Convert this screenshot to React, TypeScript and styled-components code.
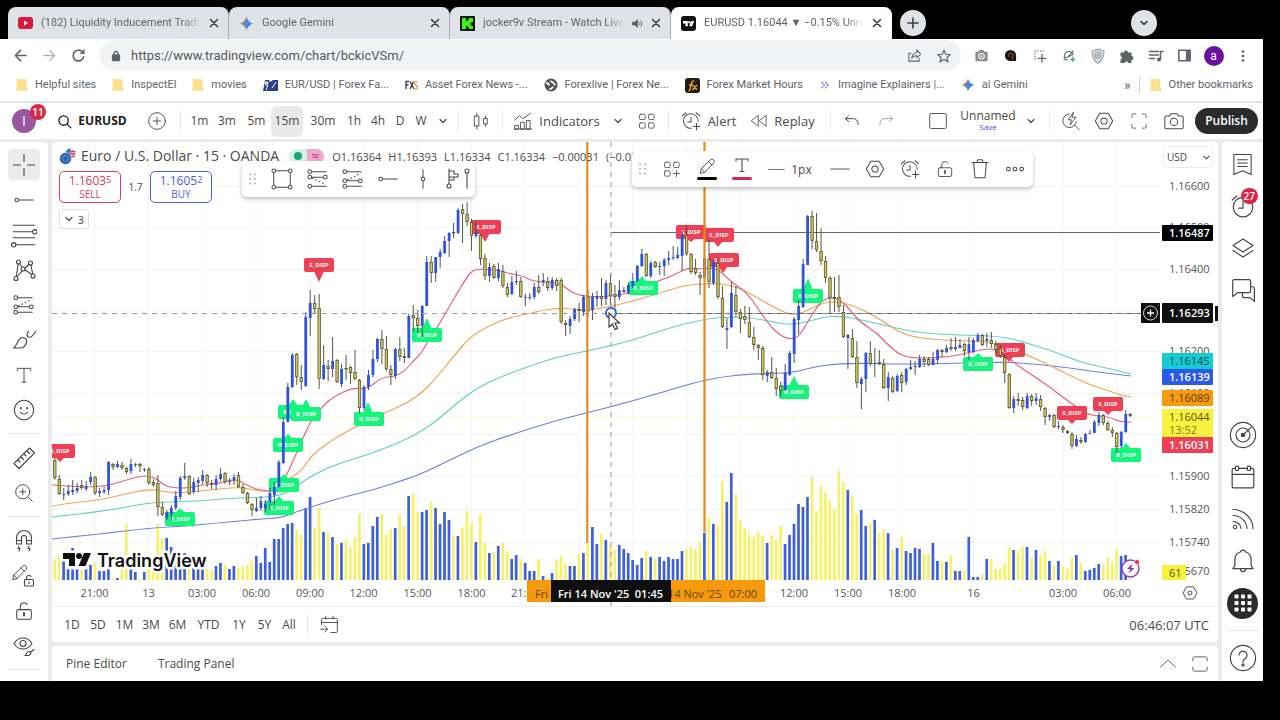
import React from "react";
import styled, { createGlobalStyle, css } from "styled-components";

/* ------------------------------------------------------------------ data */

// high, body top, body bottom, low, direction (1 up / 0 down), volume height
type Candle = [number, number, number, number, number, number];

const candles: Candle[] = [
  [458,460,478,480,0,21],[475,479,494,495,0,23],[488,494,495,500,1,19],[485,491,494,496,1,12],
  [480,490,492,495,1,32],[483,488,491,493,1,14],[480,485,488,490,0,14],[481,486,489,491,1,14],
  [472,477,482,485,1,15],[476,477,493,495,0,17],[488,491,493,497,1,9],[487,490,492,494,1,9],
  [461,462,490,495,1,11],[463,464,467,470,0,1],[461,464,467,468,1,2],[462,465,468,470,0,13],
  [467,468,472,474,0,56],[459,464,471,474,1,12],[463,464,465,467,1,8],[463,464,466,472,0,1],
  [468,469,470,472,1,8],[467,469,483,485,0,12],[479,482,485,487,0,14],[475,483,507,516,0,56],
  [502,507,515,516,0,41],[510,512,518,520,1,42],[505,508,514,521,1,33],[491,496,508,510,1,24],
  [476,478,497,500,1,26],[463,476,478,480,1,27],[475,476,494,495,0,13],[478,482,492,494,1,12],
  [477,480,483,492,1,12],[470,475,481,484,1,11],[474,475,483,487,0,11],[480,483,484,489,0,10],
  [475,479,485,490,1,14],[468,474,479,481,1,17],[472,473,482,484,0,15],[478,481,482,485,1,11],
  [474,477,480,485,1,14],[472,475,487,488,0,12],[484,487,493,494,0,14],[492,493,503,504,0,15],
  [503,504,510,516,0,19],[498,508,511,512,1,24],[496,501,508,511,1,17],[500,504,508,512,1,32],
  [488,493,502,510,1,18],[482,487,495,505,1,41],[460,462,487,488,1,41],[417,422,463,464,1,52],
  [383,387,422,422,1,56],[353,355,387,388,1,57],[353,354,377,385,0,50],[365,377,382,390,0,45],
  [312,317,386,387,1,72],[290,303,318,336,1,83],[295,303,309,314,0,52],[294,308,379,389,0,72],
  [345,365,379,380,1,48],[360,366,369,381,0,47],[337,361,369,377,1,43],[359,360,382,383,0,36],
  [364,369,384,387,1,37],[355,368,369,380,0,40],[366,367,373,384,0,33],[350,372,379,380,0,43],
  [379,380,408,413,0,66],[385,387,408,410,1,36],[370,375,387,390,1,37],[350,359,375,377,1,54],
  [338,339,359,362,1,63],[330,339,349,364,0,66],[336,349,369,371,0,45],[365,369,375,385,0,51],
  [348,349,376,379,1,52],[337,349,357,361,0,65],[348,356,358,363,0,54],[314,316,358,358,1,84],
  [305,315,318,332,0,86],[310,318,326,333,0,68],[305,306,326,337,1,68],[256,262,306,306,1,70],
  [256,262,273,283,0,78],[257,257,273,282,1,72],[249,252,257,268,1,56],[236,241,253,254,1,68],
  [232,233,241,257,1,60],[223,232,233,238,0,45],[208,210,233,234,1,44],[204,209,214,243,0,52],
  [202,214,222,226,0,69],[219,222,236,251,0,57],[222,232,236,238,1,38],[234,235,259,265,0,66],
  [254,258,276,280,0,37],[263,267,276,282,1,27],[264,266,278,279,0,28],[263,269,278,281,1,34],
  [265,271,286,288,0,37],[283,287,295,297,0,29],[276,282,294,295,1,21],[271,281,282,285,1,25],
  [277,281,297,298,0,21],[294,297,298,306,1,17],[293,297,298,300,1,9],[283,287,297,299,1,9],
  [275,287,292,294,0,21],[273,280,282,286,1,4],[277,281,288,291,0,2],[277,280,288,290,1,7],
  [278,280,286,291,0,19],[278,280,322,324,0,24],[320,323,325,336,0,16],[316,319,326,334,1,14],
  [308,309,319,321,1,14],[303,309,311,322,0,26],[295,297,312,316,1,27],[290,297,311,316,0,36],
  [293,297,310,320,1,53],[291,296,299,307,1,36],[278,296,299,306,0,46],[280,283,299,305,1,40],
  [274,283,296,305,0,34],[285,294,297,312,0,30],[280,290,297,300,1,35],[287,290,292,293,1,31],
  [283,285,293,294,1,27],[273,281,286,288,1,20],[265,266,281,282,1,15],[249,254,266,267,1,22],
  [253,254,276,277,0,29],[261,263,276,278,1,23],[261,262,267,268,0,21],[262,266,267,275,1,23],
  [258,260,266,276,1,19],[251,258,260,265,1,23],[246,257,258,260,1,21],[247,255,258,259,1,21],
  [231,235,256,271,1,29],[225,235,254,256,0,31],[253,254,272,274,0,33],[259,268,273,275,0,31],
  [272,275,278,295,0,38],[256,258,278,279,1,47],[240,259,282,288,0,62],[260,262,283,285,1,56],
  [260,263,297,299,0,54],[286,298,327,328,0,99],[318,328,330,349,1,78],[282,293,327,328,1,107],
  [286,295,312,317,0,86],[309,312,319,333,0,60],[306,316,320,324,0,52],[307,322,337,338,0,45],
  [327,337,345,350,0,43],[344,345,348,360,0,48],[346,348,375,380,0,44],[370,372,376,382,1,37],
  [357,372,378,379,0,45],[368,378,389,396,0,40],[382,386,391,397,0,54],[364,373,390,391,1,36],
  [351,353,375,376,1,45],[317,319,354,363,1,56],[300,306,320,334,1,76],[259,264,307,308,1,73],
  [215,216,265,265,1,83],[211,216,241,249,0,103],[213,241,250,252,0,69],[228,251,261,265,0,94],
  [256,261,278,283,0,87],[276,278,298,314,0,79],[277,297,299,312,0,70],[275,297,307,312,0,109],
  [305,312,337,338,0,98],[334,335,338,369,1,90],[329,338,357,358,0,83],[341,357,383,388,0,66],
  [377,379,384,409,1,70],[352,353,379,392,1,54],[341,353,364,366,0,56],[348,363,364,377,1,60],
  [350,362,364,365,0,47],[359,364,388,389,0,50],[372,377,388,401,1,47],[376,378,392,393,0,30],
  [374,376,391,392,1,32],[372,375,383,392,0,43],[368,369,382,385,1,29],[360,367,369,370,1,27],
  [361,366,367,375,1,32],[355,359,367,368,1,31],[356,359,362,367,0,26],[357,359,365,366,0,26],
  [352,359,365,365,1,37],[349,350,360,364,1,19],[349,350,352,357,0,19],[345,348,352,353,1,18],
  [338,347,349,351,0,25],[337,347,349,351,1,9],[339,345,348,348,1,9],[343,344,351,356,0,10],
  [337,344,352,360,1,43],[338,340,352,353,1,3],[333,335,341,342,1,3],[334,335,345,346,0,6],
  [333,339,341,347,1,21],[332,340,344,348,0,21],[341,344,350,353,0,11],[345,348,356,358,0,11],
  [354,357,373,383,0,16],[373,374,408,409,0,32],[396,399,408,413,1,30],[393,399,401,406,0,29],
  [397,400,407,410,0,33],[393,396,408,409,1,33],[394,396,401,406,0,22],[393,398,401,405,1,30],
  [395,399,407,411,0,25],[407,408,417,425,0,29],[414,415,417,421,1,19],[414,415,427,428,0,14],
  [421,426,427,429,1,19],[425,427,430,433,0,14],[430,431,433,434,0,11],[432,434,446,449,0,22],
  [435,439,446,447,1,25],[437,440,442,444,0,17],[433,434,442,443,1,9],[430,433,434,434,1,10],
  [420,422,433,433,1,12],[412,415,423,426,1,16],[414,415,423,425,0,15],[421,423,430,431,0,22],
  [427,430,433,437,0,18],[432,433,447,453,0,31],[431,432,446,448,1,24],[410,414,432,433,1,25],
  [413,414,416,417,0,2],
];

const FIRST_X = 54.8;
const PITCH = 4.481;
const VOLUME_BASE = 580;

type Point = [number, number];

const averages: { color: string; points: Point[] }[] = [
  {
    color: "#6f7fdc",
    points: [[52,539],[100,534],[150,528],[187,526],[217,523],[240,521],[260,519],[280,518],[293,513],[317,505],[340,498],[373,490],[407,479],[423,473],[450,460],[477,447],[507,436],[557,420],[607,408],[660,393],[693,383],[720,377],[750,374],[793,373],[813,367],[843,363],[893,364],[927,364],[1000,362],[1023,363],[1063,367],[1097,372],[1131,376]],
  },
  {
    color: "#5fd0c2",
    points: [[52,517],[100,512],[147,503],[167,502],[200,501],[233,498],[277,497],[293,489],[308,478],[323,470],[343,462],[370,454],[403,441],[422,431],[440,418],[457,403],[477,388],[500,377],[530,366],[557,357],[587,351],[627,342],[660,331],[687,323],[713,318],[733,317],[753,318],[773,322],[790,325],[807,322],[823,317],[840,316],[857,319],[880,324],[900,329],[923,333],[957,335],[1000,336],[1023,342],[1047,349],[1067,357],[1087,364],[1107,368],[1131,374]],
  },
  {
    color: "#efa452",
    points: [[52,506],[70,503],[100,500],[125,494],[150,489],[165,492],[180,493],[210,490],[238,487],[255,490],[268,492],[280,486],[292,477],[302,470],[313,454],[332,440],[353,428],[380,415],[405,404],[422,393],[437,377],[453,357],[470,337],[487,327],[507,318],[540,311],[557,308],[573,309],[587,310],[603,308],[630,302],[653,295],[673,289],[687,285],[717,283],[737,287],[753,295],[773,307],[790,315],[803,313],[813,307],[827,302],[840,302],[857,307],[880,319],[897,331],[913,337],[940,340],[967,341],[993,342],[1023,353],[1047,364],[1067,374],[1090,385],[1110,391],[1120,395],[1131,397]],
  },
  {
    color: "#e5637c",
    points: [[52,485],[63,486],[90,487],[106,486],[120,482],[140,476],[150,476],[157,479],[165,486],[175,488],[190,488],[200,485],[215,484],[236,479],[243,483],[255,489],[268,491],[276,491],[287,475],[300,445],[310,422],[322,407],[333,397],[352,388],[362,389],[368,388],[383,377],[393,377],[405,371],[413,361],[420,355],[427,343],[440,323],[453,300],[467,277],[473,270],[480,269],[497,270],[507,273],[523,276],[530,280],[540,282],[560,283],[568,290],[580,296],[603,297],[628,294],[647,285],[667,278],[680,272],[687,268],[700,269],[717,268],[727,278],[737,286],[747,293],[757,307],[767,322],[777,333],[787,339],[797,338],[803,330],[810,318],[817,307],[823,300],[832,297],[842,301],[850,310],[860,322],[877,333],[887,344],[900,355],[913,358],[937,358],[960,355],[983,349],[997,349],[1007,357],[1020,367],[1047,385],[1060,395],[1075,406],[1088,415],[1110,417],[1120,422],[1131,422]],
  },
];

// left edge, top edge, pointer tip x, pointer tip y
const sellFlags: [number, number, number, number][] = [
  [45,444,60,462],[304,258,319,282],[471,220,485,242],[676,225,691,242],[704,228,718,247],
  [709,253,723,273],[995,343,1009,362],[1057,406,1072,424],[1093,397,1108,415],
];
const buyFlags: [number, number, number, number][] = [
  [165,512,180,508],[264,501,279,496],[269,478,284,474],[273,438,288,434],[278,405,293,399],
  [291,407,306,399],[354,412,368,402],[412,328,427,318],[628,281,642,276],[793,289,808,278],
  [779,385,794,376],[963,357,978,353],[1111,448,1126,443],
];

const timeTicks: [string, number][] = [
  ["21:00",94.5],["13",148.5],["03:00",202],["06:00",256],["09:00",310],["12:00",363.5],["15:00",417.5],
  ["18:00",471.5],["21:00",525],["",579],["",633],["",687],["",741],["12:00",794],["15:00",848],
  ["18:00",902],["16",973.5],["03:00",1063],["06:00",1117],
];
const priceTicks: [string, number][] = [
  ["1.16600",186],["1.16500",227],["1.16400",269],["",310],["1.16200",351],["1.16100",393],["",434],
  ["1.15900",476],["1.15820",509],["1.15740",542],["1.15670",571],
];

/* ---------------------------------------------------------------- styles */

const uiFont = `Roboto, "Open Sans", sans-serif`;
const tvFont = `"Open Sans", "Noto Sans", sans-serif`;
const ink = "#4a4a4a";

const GlobalStyle = createGlobalStyle`
  * { box-sizing: border-box; }
  body { margin: 0; background: #000; font-family: ${tvFont}; color: ${ink}; }
  button, input, select { font: inherit; color: inherit; margin: 0; padding: 0; border: 0; background: none; }
  a { color: inherit; text-decoration: none; }
  svg { display: block; }
`;

const Screen = styled.div`
  min-height: 100vh;
  padding-right: 17px;
  background: #000;
`;

const TabStrip = styled.div`
  display: flex;
  align-items: flex-end;
  height: 39px;
  padding-left: 8px;
  font: 11px/16px ${uiFont};
`;

const Tab = styled.div<{ $active?: boolean }>`
  display: flex;
  align-items: center;
  gap: 8px;
  flex: 0 1 221px;
  min-width: 0;
  height: 32px;
  padding: 0 9px 0 10px;
  border-radius: 8px 8px 0 0;
  background: ${(p) => (p.$active ? "#fff" : "#dfe2e6")};
  border-right: 1px solid ${(p) => (p.$active ? "#fff" : "#a9adb2")};
  color: #5f6368;
`;

const TabTitle = styled.span`
  flex: 1;
  min-width: 0;
  overflow: hidden;
  white-space: nowrap;
  mask-image: linear-gradient(90deg, #000 88%, transparent);
`;

const RoundButton = styled.button<{ $end?: boolean }>`
  display: grid;
  place-items: center;
  width: 26px;
  height: 26px;
  margin: ${(p) => (p.$end ? "0 106px 3px auto" : "0 0 3px 8px")};
  border-radius: 50%;
  background: #dfe2e6;
  color: #3c4043;
`;

const PlainButton = styled.button`
  display: grid;
  place-items: center;
  flex: none;
  color: #3c4043;
`;

const BrowserBar = styled.div`
  display: flex;
  align-items: center;
  height: 33px;
  padding: 0 6px;
  background: #fff;
  color: #5f6368;
`;

const BarSlot = styled.button`
  display: grid;
  place-items: center;
  flex: none;
  width: 29px;
  height: 29px;
`;

const Address = styled.div`
  display: flex;
  align-items: center;
  flex: 1;
  height: 31px;
  margin: 0 6px 0 7px;
  padding: 0 3px 0 10px;
  border-radius: 16px;
  background: #f1f3f4;
`;

const AddressInput = styled.input`
  flex: 1;
  min-width: 0;
  height: 24px;
  margin-left: 9px;
  font: 13px/16px ${uiFont};
  outline: none;
  color: #55595e;
`;

const Profile = styled.span`
  display: grid;
  place-items: center;
  width: 20px;
  height: 20px;
  border-radius: 50%;
  background: #6d10a0;
  color: #fff;
  font: 12px/16px ${uiFont};
`;

const Bookmarks = styled.nav`
  display: flex;
  align-items: center;
  gap: 16px;
  height: 31px;
  padding: 0 10px 3px 16px;
  background: #fff;
  border-bottom: 2px solid #e4e4e6;
  font: 11px/16px ${uiFont};
  color: #5f6368;
`;

const Bookmark = styled.a<{ $last?: boolean }>`
  display: flex;
  align-items: center;
  gap: 7px;
  flex: none;
  white-space: nowrap;
  ${(p) => p.$last && css`
    padding-left: 10px;
    margin-left: -8px;
    border-left: 1px solid #d0d0d0;
  `}
`;

const More = styled.button`
  margin-left: auto;
  font: 14px/16px ${uiFont};
`;

const TopBar = styled.header`
  display: flex;
  align-items: center;
  height: 36px;
  background: #fff;
  font-size: 12px;
  line-height: 16px;
`;

const Slot = styled.button<{ $w: number; $on?: boolean }>`
  display: flex;
  align-items: center;
  justify-content: center;
  gap: 6px;
  flex: none;
  width: ${(p) => p.$w}px;
  height: 31px;
  border-radius: 6px;
  white-space: nowrap;
  background: ${(p) => (p.$on ? "#e9e9e9" : "transparent")};
`;

const SymbolButton = styled(Slot)`
  padding-right: 4px;
  font-weight: 700;
  color: #1c1c1c;
`;

const Labelled = styled(Slot)`
  font-size: 13px;
`;

const Rule = styled.i`
  flex: none;
  width: 1px;
  height: 20px;
  margin: 0 6px;
  background: #e8e8e8;
`;

const Filler = styled.span`
  flex: 1;
`;

const Avatar = styled.div`
  position: relative;
  flex: none;
  display: grid;
  place-items: center;
  width: 24px;
  height: 24px;
  margin: 0 12px;
  border-radius: 50%;
  background: #9857a0;
  color: #fff;
  font-size: 14px;
`;

const Badge = styled.span<{ $side?: boolean }>`
  position: absolute;
  top: ${(p) => (p.$side ? "3px" : "-5px")};
  right: ${(p) => (p.$side ? "5px" : "-10px")};
  height: 16px;
  min-width: 16px;
  padding: 0 ${(p) => (p.$side ? 3 : 2)}px;
  border-radius: 8px;
  background: #d92846;
  color: #fff;
  font-size: 10px;
  line-height: 16px;
  font-weight: 600;
  text-align: center;
`;

const LayoutName = styled.button`
  display: flex;
  flex-direction: column;
  align-items: center;
  flex: none;
  width: 60px;
  font-size: 12px;
  line-height: 14px;
  padding-bottom: 2px;
`;

const SaveNote = styled.small`
  font-size: 8px;
  line-height: 8px;
  color: #4b4be0;
`;

const Publish = styled.button`
  flex: none;
  width: 63px;
  height: 26px;
  margin: 0 5px 0 4px;
  border-radius: 13px;
  background: #2b2b2b;
  color: #fff;
  font-size: 12px;
  font-weight: 600;
`;

const Workspace = styled.div`
  display: flex;
  gap: 4px;
  padding-top: 3px;
  background: #ebebeb;
`;

const ToolRail = styled.aside`
  display: flex;
  flex-direction: column;
  align-items: center;
  flex: none;
  width: 48px;
  padding-top: 5px;
  background: #fff;
  border-radius: 0 4px 0 0;
  color: #444;
`;

const RailButton = styled.button<{ $on?: boolean }>`
  display: grid;
  place-items: center;
  width: 32px;
  height: 31px;
  margin: 2px 0;
  border-radius: 5px;
  background: ${(p) => (p.$on ? "#ebebeb" : "transparent")};
`;

const RailRule = styled.hr`
  flex: none;
  width: 32px;
  height: 1px;
  margin: 6px auto;
  border: 0;
  background: #e4e4e4;
`;

const Center = styled.main`
  display: flex;
  flex-direction: column;
  flex: 1;
  min-width: 0;
`;

const ChartCard = styled.section`
  position: relative;
  background: #fff;
  border-radius: 4px 4px 0 0;
  overflow: hidden;
`;

const ChartSvg = styled.svg`
  width: 100%;
  height: auto;
  font-family: ${tvFont};
`;

const Legend = styled.div`
  position: absolute;
  top: 5px;
  left: 7px;
`;

const LegendRow = styled.div`
  display: flex;
  align-items: center;
  height: 18px;
  white-space: nowrap;
  font-size: 11px;
`;

const SymbolTitle = styled.h1`
  margin: 0 10px 0 5px;
  font-size: 14px;
  line-height: 18px;
  font-weight: 400;
`;

const StatusPill = styled.span`
  display: flex;
  width: 35px;
  height: 15px;
  margin-right: 8px;
  border-radius: 8px;
  overflow: hidden;
`;

const StatusHalf = styled.span<{ $tone: string }>`
  display: grid;
  place-items: center;
  flex: 1;
  background: ${(p) => p.$tone};
  color: #c2347f;
  font-size: 14px;
  line-height: 14px;
`;

const Ohlc = styled.span`
  display: flex;
  gap: 7px;
  font-size: 11px;
`;

const QuoteRow = styled.div`
  display: flex;
  align-items: center;
  margin-top: 6px;
  font-size: 10px;
`;

const Spread = styled.span`
  width: 29px;
  text-align: center;
`;

const Quote = styled.button<{ $tone: string }>`
  width: 62px;
  height: 32px;
  border: 1px solid ${(p) => p.$tone};
  border-radius: 5px;
  background: #fff;
  color: ${(p) => p.$tone};
  font-size: 12px;
  line-height: 14px;
  font-weight: 500;
`;

const QuoteSide = styled.span`
  display: block;
  font-size: 10px;
  line-height: 13px;
  font-weight: 400;
`;

const Pip = styled.span`
  font-size: 9px;
  vertical-align: 2px;
`;

const Collapse = styled.button`
  display: flex;
  align-items: center;
  justify-content: center;
  gap: 4px;
  width: 30px;
  height: 20px;
  margin-top: 6px;
  border: 1px solid #dedede;
  border-radius: 3px;
  background: #fff;
  font-size: 11px;
`;

const FloatBar = styled.div<{ $x: number; $y: number; $w: number }>`
  position: absolute;
  left: ${(p) => p.$x}px;
  top: ${(p) => p.$y}px;
  width: ${(p) => p.$w}px;
  height: 36px;
  display: flex;
  align-items: center;
  border-radius: 5px;
  background: #fff;
  box-shadow: 0 2px 4px rgba(0, 0, 0, 0.25);
  overflow: hidden;
  font-size: 12px;
`;

const CurrencyBox = styled.label`
  position: absolute;
  top: 4px;
  right: 5px;
  display: flex;
  align-items: center;
  width: 50px;
  height: 22px;
  padding-right: 1px;
  border: 1px solid #ececec;
  border-radius: 4px;
  background: #fff;
  font-size: 10px;
`;

const Currency = styled.select`
  appearance: none;
  flex: 1;
  min-width: 0;
  padding-left: 3px;
  outline: none;
`;

const RangeBar = styled.div`
  display: flex;
  align-items: center;
  height: 36px;
  padding: 0 9px 0 7px;
  background: #fff;
  border-top: 1px solid #ececec;
  border-radius: 0 0 4px 4px;
  font-size: 12px;
`;

const Clock = styled.button`
  margin-left: auto;
  font-size: 13px;
`;

const PanelBar = styled.footer`
  display: flex;
  align-items: center;
  gap: 31px;
  height: 35px;
  margin-top: 4px;
  padding: 0 3px 0 14px;
  background: #fff;
  border-radius: 4px 4px 0 0;
  font-size: 12px;
`;

const PanelTools = styled.div`
  display: flex;
  margin-left: auto;
`;

const SideRail = styled.aside`
  display: flex;
  flex-direction: column;
  align-items: center;
  flex: none;
  width: 41px;
  padding: 1px 0 2px;
  background: #fff;
  border-radius: 4px 0 0 0;
  color: #444;
`;

const SideButton = styled.button`
  position: relative;
  display: grid;
  place-items: center;
  width: 41px;
  height: 42px;
`;

const AppsDisc = styled.span`
  display: grid;
  place-items: center;
  width: 31px;
  height: 31px;
  border-radius: 50%;
  background: #2b2b2b;
  color: #fff;
`;

/* ----------------------------------------------------------------- icons */

type IconProps = { size?: number; w?: number; box?: string; children: React.ReactNode };
const Icon = ({ size = 24, w = 1.1, box = "0 0 24 24", children }: IconProps) => (
  <svg width={size} height={size} viewBox={box} fill="none" stroke="currentColor" strokeWidth={w} strokeLinecap="round" strokeLinejoin="round" aria-hidden="true">
    {children}
  </svg>
);

const Ring = ({ x, y, r = 2 }: { x: number; y: number; r?: number }) => <circle cx={x} cy={y} r={r} fill="#fff" />;

const Chevron = ({ size = 10 }: { size?: number }) => (
  <Icon size={size} box="0 0 10 10" w={1.2}><path d="M2 3.500 5 6.500 8 3.500" /></Icon>
);
const Close = () => (
  <Icon size={10} box="0 0 10 10" w={1.6}><path d="M1.500 1.500 8.500 8.500M8.500 1.500 1.500 8.500" /></Icon>
);
const Folder = () => (
  <Icon size={12} box="0 0 12 14"><path d="M.5 .5h10v10h1.200V13.500H.5Z" fill="#fbe38d" stroke="#e9cd6c" strokeWidth=".6" /></Icon>
);
const Gemini = ({ size = 14 }: { size?: number }) => (
  <svg width={size} height={size} viewBox="0 0 16 16" aria-hidden="true">
    <path d="M8 0C8.600 4.500 11.500 7.400 16 8H8Z" fill="#4285f4" />
    <path d="M8 16C8.600 11.500 11.500 8.600 16 8H8Z" fill="#3f6fe0" />
    <path d="M8 0C7.400 4.500 4.500 7.400 0 8H8Z" fill="#e5544b" />
    <path d="M8 16C7.400 11.500 4.500 8.600 0 8H8Z" fill="#3fae62" />
    <path d="M8 3.500C8.500 6 10 7.500 12.500 8 10 8.500 8.500 10 8 12.500 7.500 10 6 8.500 3.500 8 6 7.500 7.500 6 8 3.500Z" fill="#4b8bf2" />
  </svg>
);
const TvMark = ({ fill = "#fff" }: { fill?: string }) => (
  <g fill={fill} stroke="none">
    <path d="M0 0H12V13H6V6H0Z" /><circle cx="16" cy="3" r="3" /><path d="M21 0H28L22.500 13H15.500Z" />
  </g>
);
const Hex = ({ size = 22 }: { size?: number }) => (
  <Icon size={size}><path d="M7.500 3.500h9L21.500 12l-5 8.500h-9L2.500 12Z" /><circle cx="12" cy="12" r="3.400" /></Icon>
);
const AlarmPlus = ({ size = 22 }: { size?: number }) => (
  <Icon size={size}><path d="M19.800 12.500A8 8 0 1 0 12.500 20M12 8v5H8.500M2.500 6.500 6.500 3M21.500 6.500 17.500 3M18 14.500v7M14.500 18h7" /></Icon>
);
const OpenLock = ({ size = 22 }: { size?: number }) => (
  <Icon size={size}><rect x="4" y="10.500" width="16" height="10.500" rx="2" /><path d="M8 10.500V7a4 4 0 0 1 7.500-1.800" /><path d="M12 14v3" strokeWidth="2" /></Icon>
);
const Grip = () => (
  <Icon size={14} box="0 0 14 14">
    <g fill="#b0b0b0" stroke="none">
      {[2.5, 7, 11.5].map((y) => [4, 9].map((x) => <circle key={`${x}${y}`} cx={x} cy={y} r="1" />))}
    </g>
  </Icon>
);
const FibUp = () => (
  <Icon size={22}><path d="M4 4h17M4 14h15M4 20h17" /><path d="M6 13 20 6" strokeDasharray="1 3" /><Ring x={3} y={4} /><Ring x={3} y={14} /><Ring x={20} y={14} /><Ring x={3} y={20} /></Icon>
);
const FibDown = () => (
  <Icon size={22}><path d="M4 4h17M4 10h15M4 20h17" /><path d="M6 11 20 18" strokeDasharray="1 3" /><Ring x={3} y={4} /><Ring x={3} y={10} /><Ring x={20} y={10} /><Ring x={3} y={20} /></Icon>
);
const Trend = () => <Icon size={22}><path d="M5 12h17" /><Ring x={4} y={12} /></Icon>;
const TextIcon = ({ size = 22 }: { size?: number }) => <Icon size={size}><path d="M4 6.500V4h16v2.500M12 4v16.500M9.500 20.500h5" /></Icon>;
const Pencil = () => <path d="M4 20l1-5L15.500 4.500a2.500 2.500 0 0 1 4 4L9 19ZM13.500 6.500l4 4M5 15l4 4" />;

/* ----------------------------------------------------------------- chart */

const smooth = (pts: Point[]) => {
  let d = `M${pts[0][0]} ${pts[0][1]}`;
  for (let i = 1; i < pts.length - 1; i++) {
    const [x, y] = pts[i];
    const mx = (x + pts[i + 1][0]) / 2;
    const my = (y + pts[i + 1][1]) / 2;
    d += `Q${x} ${y} ${mx} ${my}`;
  }
  const last = pts[pts.length - 1];
  return `${d}L${last[0]} ${last[1]}`;
};

const Flag = ({ x, y, tx, ty, sell }: { x: number; y: number; tx: number; ty: number; sell?: boolean }) => {
  const edge = sell ? y + 13 : y + 1;
  const fill = sell ? "#ee3f55" : "#14f57c";
  return (
    <g>
      <rect x={x} y={y} width="30" height="14" rx="2" fill={fill} />
      <path d={`M${tx - 5} ${edge}L${tx} ${ty}L${tx + 5} ${edge}Z`} fill={fill} />
      <text x={x + 15} y={y + 9} textAnchor="middle" fontSize="6" fontWeight="700" fill="#fff">{sell ? "S_DISP" : "B_DISP"}</text>
    </g>
  );
};

const PriceTag = ({ y, h = 16, fill, color, label, bold }: { y: number; h?: number; fill: string; color: string; label: string; bold?: boolean }) => (
  <g>
    <rect x="1162" y={y} width="51" height={h} rx="1" fill={fill} />
    <text x="1169" y={y + h / 2 + 4} fontSize="11" fontWeight={bold ? 600 : 400} fill={color}>{label}</text>
  </g>
);

const Chart = () => (
  <ChartSvg viewBox="52 142 1166 464" role="img" aria-label="EURUSD 15 minute chart">
    <g stroke="#f3f3f3">
      {timeTicks.map(([, x]) => <path key={x} d={`M${x} 142V580`} />)}
      {priceTicks.slice(0, 10).map(([, y]) => <path key={y} d={`M52 ${y + 0.5}H1160`} />)}
    </g>
    <path d="M52 416.500H1160" stroke="#fbf9c4" strokeDasharray="1 1" />

    {candles.map((c, i) => (
      <rect key={i} x={FIRST_X + i * PITCH - 1.5} y={VOLUME_BASE - c[5]} width="2.700" height={c[5]} fill={c[4] ? "#3f60dc" : "#f7f167"} />
    ))}

    <g fill="none" strokeWidth="1.200">
      {averages.map((a) => <path key={a.color} d={smooth(a.points)} stroke={a.color} />)}
    </g>
    <path d="M611 232.500H1160M611 313.500H1142" stroke="#6a6a6a" />

    {buyFlags.map(([x, y, tx, ty]) => <Flag key={`${x}-${y}`} x={x} y={y} tx={tx} ty={ty} />)}
    {sellFlags.map(([x, y, tx, ty]) => <Flag key={`${x}-${y}`} x={x} y={y} tx={tx} ty={ty} sell />)}

    {candles.map(([h, t, b, l, up], i) => {
      const x = FIRST_X + i * PITCH;
      return (
        <g key={i}>
          <path d={`M${x} ${h}V${l}`} stroke={up ? "#3a3f5c" : "#44432f"} strokeWidth=".9" />
          {up ? (
            <rect x={x - 1.4} y={t} width="2.800" height={Math.max(b - t, 1)} fill="#2f52e0" />
          ) : (
            <rect x={x - 1.2} y={t + 0.4} width="2.400" height={Math.max(b - t - 0.8, 0.6)} fill="#cfc85a" stroke="#55532c" strokeWidth=".8" />
          )}
        </g>
      );
    })}

    <path d="M587.300 142V543M704.500 142V532" stroke="#e58a1c" strokeWidth="2.200" />
    <path d="M52 313.500H1142" stroke="#9a9a9a" strokeDasharray="5 5" />
    <path d="M611 142V606" stroke="#9a9a9a" strokeDasharray="5 5" />
    <circle cx="611" cy="313" r="5" fill="#fff" fillOpacity=".6" stroke="#3a5fe0" strokeWidth="2" />
    <path d="M609 313v14l3.500-3 2.500 5.500 2.500-1-2.500-5.500h4.500Z" fill="#fff" stroke="#333" strokeWidth="1.100" />

    <g transform="translate(63 553)" stroke="#fff" strokeWidth="5" strokeLinejoin="round">
      <path d="M0 0H12V14H6V6H0ZM21 0H28L22.500 14H15.500Z" fill="#fff" />
      <circle cx="16" cy="3" r="3" fill="#fff" />
      <TvMark fill="#111" />
      <text x="34" y="14" fontSize="18" fontWeight="600" fontFamily="Inter, sans-serif" fill="#111" paintOrder="stroke">TradingView</text>
    </g>

    <circle cx="1130.500" cy="568.500" r="8.500" fill="#fff" stroke="#9a3fae" strokeWidth="1.500" />
    <path d="M1133 563.500l-6 5.500h3.500l-2 4.500 6-5.500h-3.500Z" fill="#8a2fae" />
    <circle cx="1137" cy="562" r="2.500" fill="#e23450" stroke="#fff" strokeWidth=".6" />

    <g fontSize="11" fill="#575757">
      {timeTicks.filter(([t]) => t).map(([t, x]) => <text key={x} x={x} y="597" textAnchor="middle">{t}</text>)}
      {priceTicks.filter(([t]) => t).map(([t, y]) => <text key={y} x="1169" y={y + 4}>{t}</text>)}
    </g>

    <rect x="527" y="580" width="238" height="22" fill="#f49a0c" />
    <text x="535" y="598" fontSize="11" fill="#6a4306">Fri</text>
    <text x="668" y="598" fontSize="11" fill="#6a4306">14 Nov '25</text>
    <text x="729" y="598" fontSize="11" fill="#6a4306">07:00</text>
    <rect x="551" y="580" width="120" height="22" fill="#0f0f0f" />
    <text x="558" y="598" fontSize="11" fontWeight="600" fill="#fff">Fri 14 Nov '25</text>
    <text x="663" y="598" fontSize="11" fontWeight="600" fill="#fff" textAnchor="end">01:45</text>

    <PriceTag y={225} fill="#000" color="#fff" label="1.16487" bold />
    <PriceTag y={303} h={20} fill="#0f0f0f" color="#fff" label="1.16293" bold />
    <rect x="1141" y="303" width="19" height="20" fill="#0f0f0f" />
    <circle cx="1150.500" cy="313" r="7" fill="none" stroke="#d8d8d8" />
    <path d="M1147 313h7M1150.500 309.500v7" stroke="#fff" strokeWidth="1.300" />
    <rect x="1215" y="306" width="3" height="15" fill="#111" />
    <PriceTag y={353} fill="#14cdd2" color="#11464a" label="1.16145" />
    <PriceTag y={369} fill="#2b59ea" color="#fff" label="1.16139" bold />
    <PriceTag y={390} fill="#f49a0c" color="#5a3b08" label="1.16089" />
    <rect x="1162" y="409" width="51" height="28" fill="#f8f23c" />
    <text x="1169" y="421" fontSize="11" fill="#55521a">1.16044</text>
    <text x="1169" y="434" fontSize="11" fill="#7d7a22">13:52</text>
    <PriceTag y={437} fill="#ee3f55" color="#fff" label="1.16031" bold />
    <rect x="1162" y="565" width="24" height="15" fill="#f8f23c" />
    <text x="1169" y="577" fontSize="11" fill="#55521a">61</text>

    <g transform="translate(1190 593)" fill="none" stroke="#555">
      <path d="M-3.500-6h7L7 0 3.500 6h-7L-7 0Z" /><circle r="2" />
    </g>
  </ChartSvg>
);

/* ------------------------------------------------------------------- app */

const BrowserChrome = () => (
  <>
    <TabStrip>
      <Tab>
        <svg width="15" height="12" viewBox="0 0 15 12" aria-hidden="true"><rect width="15" height="12" rx="3" fill="#e0173c" /><path d="M6 3.500v5L10 6Z" fill="#fff" /></svg>
        <TabTitle>(182) Liquidity Inducement Trading</TabTitle>
        <PlainButton aria-label="Close tab"><Close /></PlainButton>
      </Tab>
      <Tab>
        <Gemini size={15} />
        <TabTitle>Google Gemini</TabTitle>
        <PlainButton aria-label="Close tab"><Close /></PlainButton>
      </Tab>
      <Tab>
        <svg width="15" height="15" viewBox="0 0 15 15" aria-hidden="true"><rect width="15" height="15" rx="1" fill="#0b1a0b" /><path d="M2 2h4v3h1.500V3.500H9V2h4v4h-1.500v1.500H10v1h1.500V10H13v3H9v-1.500H7.500V10H6v3H2Z" fill="#3ff01c" /></svg>
        <TabTitle>jocker9v Stream - Watch Live</TabTitle>
        <Icon size={11} box="0 0 12 12" w={1}><path d="M1 4.500h2L6 2v8L3 7.500H1Z" fill="currentColor" /><path d="M8 4.500a2 2 0 0 1 0 3M9.500 3a4 4 0 0 1 0 6" /></Icon>
        <PlainButton aria-label="Close tab"><Close /></PlainButton>
      </Tab>
      <Tab $active>
        <svg width="15" height="15" viewBox="0 0 15 15" aria-hidden="true"><rect width="15" height="15" rx="3" fill="#111" /><g transform="translate(2 5) scale(.4)"><TvMark /></g></svg>
        <TabTitle>EURUSD 1.16044 ▼ −0.15% Unnamed</TabTitle>
        <PlainButton aria-label="Close tab"><Close /></PlainButton>
      </Tab>
      <RoundButton aria-label="New tab"><Icon size={14} box="0 0 14 14" w={1.6}><path d="M7 2v10M2 7h10" /></Icon></RoundButton>
      <RoundButton $end aria-label="Search tabs"><Icon size={12} box="0 0 12 12" w={1.6}><path d="M3 4.500 6 7.500 9 4.500" /></Icon></RoundButton>
    </TabStrip>

    <BrowserBar>
      <BarSlot aria-label="Back"><Icon size={15} box="0 0 16 16" w={1.7}><path d="M14 8H2.500M8 2.500 2.500 8 8 13.500" /></Icon></BarSlot>
      <BarSlot aria-label="Forward"><Icon size={15} box="0 0 16 16" w={1.5}><path d="M2 8h11.500M8 2.500 13.500 8 8 13.500" stroke="#b4b7bb" /></Icon></BarSlot>
      <BarSlot aria-label="Reload"><Icon size={15} box="0 0 16 16" w={1.8}><path d="M13.500 9.500A5.700 5.700 0 1 1 12 4l1.500 1.500" /><path d="M14 2v4h-4Z" fill="currentColor" strokeWidth=".8" /></Icon></BarSlot>
      <Address>
        <Icon size={12} box="0 0 12 12" w={1.3}><rect x="2.500" y="5" width="7" height="5.500" rx=".5" fill="currentColor" /><path d="M4 5V3.500a2 2 0 0 1 4 0V5" /></Icon>
        <AddressInput aria-label="Address" defaultValue="https://www.tradingview.com/chart/bckicVSm/" />
        <BarSlot aria-label="Share"><Icon size={15} box="0 0 16 16" w={1.1}><path d="M4.500 5.500H2V14h11v-3M5 11c.5-4 2.500-6 5.500-6V2l4 4.500-4 4V8C8.500 8 6.500 9 5 11Z" /></Icon></BarSlot>
        <BarSlot aria-label="Bookmark"><Icon size={14} box="0 0 16 16" w={1.4}><path d="M8 1.500 10 6l5 .5-3.700 3.200L12.400 14.500 8 12l-4.400 2.500 1.100-4.800L1 6.500 6 6Z" strokeLinejoin="miter" /></Icon></BarSlot>
      </Address>
      <BarSlot aria-label="Screenshot"><Icon size={15} box="0 0 16 16"><path d="M1.500 4h3L6 2h4l1.500 2h3v10h-13Z" fill="#8a8d91" stroke="none" /><circle cx="8" cy="8.800" r="3" stroke="#fff" /><circle cx="8" cy="8.800" r="1" fill="#fff" stroke="none" /></Icon></BarSlot>
      <BarSlot aria-label="Extension"><Icon size={13} box="0 0 14 14"><path d="M1 7a6 6 0 0 1 12 0v6H7a6 6 0 0 1-6-6Z" fill="#221611" stroke="none" /><path d="M5 8a2.500 2.500 0 1 1 4 1v2" stroke="#7a5140" /></Icon></BarSlot>
      <BarSlot aria-label="Selection"><Icon size={14} box="0 0 14 14" w={1.3}><path d="M2 2h8M2 2v8M10 2v2M2 10h2" strokeDasharray=".1 2.600" /><path d="M9 5.500v7.500M5.300 9.300h7.500" /></Icon></BarSlot>
      <BarSlot aria-label="Extension"><Icon size={15} box="0 0 16 16" w={1.1}><path d="M4 11A5 5 0 1 1 13 6.500C10 9.500 7 9 4 11ZM3 12.500h4M8 9 13 3" /><path d="M12.500 9.500v4M10.500 11.800l2 2 2-2" stroke="#4fb56a" strokeWidth="1.400" /></Icon></BarSlot>
      <BarSlot aria-label="Shield"><Icon size={16} box="0 0 16 16"><path d="M8 1 14 3c0 6-1.500 10-6 12.500C3.500 13 2 9 2 3Z" fill="#d5dade" stroke="#9aa3ab" /><circle cx="8" cy="7" r="3" stroke="#9aa3ab" /><circle cx="8" cy="7" r="1" stroke="#9aa3ab" /></Icon></BarSlot>
      <BarSlot aria-label="Extensions"><Icon size={16} box="0 0 16 16"><path d="M1.500 4.500H5a2 2 0 1 1 4 0h3.500V8a2 2 0 1 1 0 4v3H9.200a1.800 1.800 0 0 0-3.500 0H1.500v-3.500a1.800 1.800 0 0 0 0-3.500Z" fill="currentColor" stroke="none" /></Icon></BarSlot>
      <BarSlot aria-label="Media"><Icon size={16} box="0 0 16 16" w={1.5}><path d="M1.500 3.500h9M1.500 7h9M1.500 10.500h5M12.500 11V3.500h2.500" /><circle cx="11" cy="11.500" r="1.300" fill="currentColor" /></Icon></BarSlot>
      <BarSlot aria-label="Side panel"><Icon size={15} box="0 0 16 16" w={1.6}><path d="M2 2.500h12v11H2Z" strokeLinejoin="miter" /><path d="M9.500 3H14v10H9.500Z" fill="currentColor" stroke="none" /></Icon></BarSlot>
      <BarSlot aria-label="Profile"><Profile>a</Profile></BarSlot>
      <BarSlot aria-label="Menu"><Icon size={14} box="0 0 14 14"><g fill="currentColor" stroke="none"><circle cx="7" cy="2.500" r="1.300" /><circle cx="7" cy="7" r="1.300" /><circle cx="7" cy="11.500" r="1.300" /></g></Icon></BarSlot>
    </BrowserBar>

    <Bookmarks aria-label="Bookmarks">
      <Bookmark href="#"><Folder />Helpful sites</Bookmark>
      <Bookmark href="#"><Folder />InspectEl</Bookmark>
      <Bookmark href="#"><Folder />movies</Bookmark>
      <Bookmark href="#">
        <svg width="15" height="12" viewBox="0 0 15 12" aria-hidden="true"><path d="M2 1h4l1 2 3-2h5v11H0Z" fill="#2b3f86" /><path d="M2 3h3v1.500H2ZM2 6h3l-2 5M9 9l4-6" stroke="#fff" fill="none" /></svg>
        EUR/USD | Forex Fa...
      </Bookmark>
      <Bookmark href="#">
        <svg width="13" height="12" viewBox="0 0 13 12" aria-hidden="true"><path d="M1 10V2.500h3M1 6h2.500M5 2.500l4 7.500M8.500 2.500 5 10" stroke="#3b3b3b" strokeWidth="1.300" fill="none" /><path d="M12.500 3c-2-1-3 0-3 1.500 0 2 3 1.500 3 3.500S10.500 10.500 9 9.500" stroke="#e8a25c" strokeWidth="1.500" fill="none" /></svg>
        Asset Forex News -...
      </Bookmark>
      <Bookmark href="#">
        <svg width="14" height="14" viewBox="0 0 14 14" aria-hidden="true"><circle cx="7" cy="7" r="6.500" fill="#505357" /><path d="M2 5c2 0 3 1 3 2.500M7 2.500C6.500 4 8 4 9 4.500S9.500 6.500 11.500 7M5.500 11c1.500 0 3-1 3.500-2.500" stroke="#fff" strokeWidth="1.800" fill="none" /></svg>
        Forexlive | Forex Ne...
      </Bookmark>
      <Bookmark href="#">
        <svg width="15" height="15" viewBox="0 0 15 15" aria-hidden="true"><rect width="15" height="15" rx="3" fill="#231c14" /><path d="M3.500 13c2 0 2-3 2.500-5.500S7 2.500 9 3M4 7h4M8 7.500l4 4M12 7l-4.500 5" stroke="#f0a32b" strokeWidth="1.400" fill="none" /></svg>
        Forex Market Hours
      </Bookmark>
      <Bookmark href="#">
        <Icon size={12} box="0 0 13 13" w={1.3}><path d="M3 3.500 6 6.500 3 9.500M7 3.500l3 3-3 3" stroke="#7d7fe0" strokeDasharray="2 1.500" /></Icon>
        Imagine Explainers |...
      </Bookmark>
      <Bookmark href="#"><Gemini />ai Gemini</Bookmark>
      <More aria-label="More bookmarks">»</More>
      <Bookmark href="#" $last><Folder />Other bookmarks</Bookmark>
    </Bookmarks>
  </>
);

const Toolbar = () => (
  <TopBar>
    <Avatar>I<Badge>11</Badge></Avatar>
    <SymbolButton $w={92}>
      <Icon size={15} box="0 0 16 16" w={1.4}><circle cx="7" cy="7" r="5" /><path d="m10.800 10.800 4 4" /></Icon>
      EURUSD
    </SymbolButton>
    <Slot $w={34} aria-label="Compare"><Icon size={20}><circle cx="12" cy="12" r="10" /><path d="M12 7.500v9M7.500 12h9" /></Icon></Slot>
    <Rule />
    <Slot $w={25}>1m</Slot>
    <Slot $w={30}>3m</Slot>
    <Slot $w={29}>5m</Slot>
    <Slot $w={32} $on>15m</Slot>
    <Slot $w={40}>30m</Slot>
    <Slot $w={22}>1h</Slot>
    <Slot $w={26}>4h</Slot>
    <Slot $w={18}>D</Slot>
    <Slot $w={24}>W</Slot>
    <Slot $w={19} aria-label="Intervals"><Chevron /></Slot>
    <Rule />
    <Slot $w={31} aria-label="Chart type"><Icon size={20}><path d="M4.500 6h5v12h-5ZM7 2.500V6M7 18v3.500M15.500 9h4v6.500h-4ZM17.500 6v3M17.500 15.500v3" /></Icon></Slot>
    <Rule />
    <Labelled $w={95}>
      <Icon size={20}><path d="M2 21.500v-4h4.500v4ZM9 21.500v-8h4.500v8ZM16 21.500v-10h4.500v10ZM1.500 21.500h21M2 11l6-5.500 4 4L21 2.500" /></Icon>
      Indicators
    </Labelled>
    <Slot $w={28} aria-label="Favorite indicators"><Chevron /></Slot>
    <Slot $w={30} aria-label="Templates"><Icon size={18}><rect x="2" y="3" width="7.500" height="7" rx="1.500" /><rect x="14" y="3" width="7.500" height="7" rx="1.500" /><rect x="2" y="14.500" width="7.500" height="7" rx="1.500" /><rect x="14" y="14.500" width="7.500" height="7" rx="1.500" /></Icon></Slot>
    <Rule />
    <Labelled $w={66}><AlarmPlus />Alert</Labelled>
    <Labelled $w={83}><Icon size={18}><path d="M11 5v14L2 12ZM21.500 5v14l-9-7Z" /></Icon>Replay</Labelled>
    <Rule />
    <Slot $w={30} aria-label="Undo"><Icon size={16} w={1.5}><path d="M7 4 2.500 8.500 7 13M2.500 8.500H14a7 7 0 0 1 7 7v2" /></Icon></Slot>
    <Slot $w={38} aria-label="Redo"><Icon size={16} w={1.2}><path d="M17 4l4.500 4.500L17 13M21.500 8.500H10a7 7 0 0 0-7 7v2" stroke="#8e8e8e" /></Icon></Slot>
    <Filler />
    <Slot $w={40} aria-label="Layout setup"><Icon size={20}><rect x="2" y="3" width="20" height="18" rx="2" /></Icon></Slot>
    <LayoutName>Unnamed<SaveNote>Save</SaveNote></LayoutName>
    <Slot $w={25} aria-label="Manage layouts"><Chevron /></Slot>
    <Rule />
    <Slot $w={30} aria-label="Quick search"><Icon size={20}><path d="M10 3.500A8.200 8.200 0 1 0 18.500 13M16.500 17l5.500 5.500M15 1.500 8.500 10.500h4L11 16.500l7-9h-4.500Z" /></Icon></Slot>
    <Slot $w={35} aria-label="Settings"><Hex /></Slot>
    <Slot $w={35} aria-label="Fullscreen"><Icon size={18}><path d="M2.500 7.500v-3a2 2 0 0 1 2-2h3M16.500 2.500h3a2 2 0 0 1 2 2v3M21.500 16.500v3a2 2 0 0 1-2 2h-3M7.500 21.500h-3a2 2 0 0 1-2-2v-3" /></Icon></Slot>
    <Slot $w={35} aria-label="Snapshot"><Icon size={22}><path d="M3.500 6.500H7L9 4h6l2 2.500h3.500a1.500 1.500 0 0 1 1.500 1.500v11a1.500 1.500 0 0 1-1.500 1.500h-17A1.500 1.500 0 0 1 2 19V8a1.500 1.500 0 0 1 1.500-1.500Z" /><circle cx="12" cy="13" r="4" /></Icon></Slot>
    <Publish>Publish</Publish>
  </TopBar>
);

const Tools = () => (
  <ToolRail aria-label="Drawing tools">
    <RailButton $on aria-label="Cursor"><Icon size={24}><path d="M12 1.500v7M12 15.500v7M1.500 12h7M15.500 12h7" /></Icon></RailButton>
    <RailButton aria-label="Trend line"><Trend /></RailButton>
    <RailButton aria-label="Fib retracement"><Icon size={26} w={1}><path d="M2 3h20M2 9h18M2 14.500h20M2 21h20" /><Ring x={22} y={9} /><Ring x={2.500} y={21} /></Icon></RailButton>
    <RailButton aria-label="Patterns"><Icon size={24}><path d="M4 20 6.500 4.500 12 11l6.500-6L21 17.500l-9-6.500Z" /><Ring x={4} y={20.500} /><Ring x={6.500} y={4} /><Ring x={11} y={11} /><Ring x={18.500} y={5} /><Ring x={21} y={18} /></Icon></RailButton>
    <RailButton aria-label="Forecasting"><FibUp /></RailButton>
    <RailButton aria-label="Brush"><Icon size={24}><path d="M1.500 20c3-1 3.500-8 7.500-10 4-1.500 7 2 5 6-1.500 3-4 4-6 4ZM15 6.500c0 3 4 4 6 .5l3-4M15 6.500c0-1.500 1-2.500 1.500-3" /></Icon></RailButton>
    <RailButton aria-label="Text"><TextIcon size={20} /></RailButton>
    <RailButton aria-label="Emoji"><Icon size={24}><circle cx="12" cy="12" r="9.700" /><path d="M8.500 14.500c1.500 2 5.500 2 7 0" /><path d="M9 10v.2M15 10v.2" strokeWidth="2" /></Icon></RailButton>
    <RailRule />
    <RailButton aria-label="Measure"><Icon size={24}><path d="M2 17.500 17.500 2 22.500 7 7 22.500Z M6 14l2 2M9 11l2.500 2.500M12 8l2 2M15 5l2.500 2.500" /></Icon></RailButton>
    <RailButton aria-label="Zoom in"><Icon size={20}><circle cx="10.500" cy="10.500" r="8.500" /><path d="m17 17 5 5M10.500 7v7M7 10.500h7" /></Icon></RailButton>
    <RailRule />
    <RailButton aria-label="Magnet"><Icon size={24}><path d="M4.500 15V9a7.500 7.500 0 0 1 15 0v6h-5V9a2.500 2.500 0 0 0-5 0v6ZM4.500 11.500h5M14.500 11.500h5M7 17.500l-1 2h2l-1 2.500M17 17.500l-1 2h2l-1 2.500" /></Icon></RailButton>
    <RailButton aria-label="Stay in drawing mode"><Icon size={24}><g transform="scale(.85) translate(-3 -2)"><Pencil /></g><rect x="12.500" y="15.500" width="9" height="6.500" rx="1" fill="#fff" /><path d="M14.500 15.500V13.500a2.500 2.500 0 0 1 4.500-1M17 18v1.500" /></Icon></RailButton>
    <RailButton aria-label="Lock drawings"><OpenLock /></RailButton>
    <RailButton aria-label="Hide drawings"><Icon size={24}><path d="M2 9.500C4.500 5.500 7.500 4 11 4s6.500 1.500 9 5.500c-2.500 4-5.500 5.500-9 5.500S4.500 13.500 2 9.500Z" /><circle cx="11" cy="9.500" r="3" /><path d="M13 21.500c1.500-.5 1.500-4 4-4s2.500 3-.5 4ZM19 18l3-2.500" /></Icon></RailButton>
    <RailRule />
  </ToolRail>
);

const SideTools = () => (
  <SideRail aria-label="Widgets">
    <SideButton aria-label="Watchlist"><Icon size={23}><path d="M3 1.500h18v21l-9-4-9 4ZM7 7h10M7 10.500h10M7 14h10" /></Icon></SideButton>
    <SideButton aria-label="Alerts"><Icon size={26}><circle cx="12" cy="13" r="9" /><path d="M12 8v6H8M2 6.500 6 3" /></Icon><Badge $side>27</Badge></SideButton>
    <SideButton aria-label="Object tree"><Icon size={24}><path d="M12 3 22 9.500 12 16 2 9.500ZM2 14.500l10 6.500 10-6.500" /></Icon></SideButton>
    <SideButton aria-label="Chats"><Icon size={26}><path d="M3.500 2.500h14A1.500 1.500 0 0 1 19 4v9a1.500 1.500 0 0 1-1.500 1.500H7l-4.500 3.500V4A1.500 1.500 0 0 1 3.500 2.500ZM19 9h2a1.500 1.500 0 0 1 1.500 1.500v12L18.500 19H13a1.500 1.500 0 0 1-1.500-1.500v-3" /></Icon></SideButton>
    <Filler />
    <SideButton aria-label="Screeners"><Icon size={28} w={1}><circle cx="12" cy="12" r="10.800" /><circle cx="12" cy="12" r="6" /><path d="m12 12 7-6.500" /><circle cx="12" cy="12" r="1.500" fill="currentColor" /></Icon></SideButton>
    <SideButton aria-label="Calendar"><Icon size={26}><rect x="2" y="4" width="20" height="18" rx="1.500" /><path d="M2 9.500h20" /><rect x="5" y="2" width="3" height="4" rx="1" fill="#fff" /><rect x="16" y="2" width="3" height="4" rx="1" fill="#fff" /></Icon></SideButton>
    <SideButton aria-label="Ideas stream"><Icon size={24}><path d="M2 2.500c11 0 20 9 20 19M2 8.500c7.500 0 14 6 14 13M2 14.500c4 0 8 3 8 7" /><circle cx="4" cy="20" r="1.700" /></Icon></SideButton>
    <SideButton aria-label="Notifications"><Icon size={26}><path d="M12 2c1.500 0 2 .5 2 1.500 4 1 5.500 4 5.500 7.500v5.500l2 2.500h-19l2-2.500V11c0-3.500 1.500-6.500 5.500-7.500C10 2.500 10.500 2 12 2ZM9.500 19.500c.5 3 4.500 3 5 0" /></Icon></SideButton>
    <SideButton aria-label="Products">
      <AppsDisc>
        <Icon size={18} box="0 0 18 18">
          <g fill="currentColor" stroke="none">{[0, 1, 2].map((r) => [0, 1, 2].map((c) => <rect key={`${r}${c}`} x={c * 6.5 + 0.5} y={r * 6.5 + 0.5} width="4" height="4" rx=".8" />))}</g>
        </Icon>
      </AppsDisc>
    </SideButton>
    <RailRule />
    <SideButton aria-label="Help"><Icon size={28} w={1}><circle cx="12" cy="12" r="10.800" /><path d="M8.500 9.500a3.500 3.500 0 1 1 5.500 3c-1.500 1-2 1.500-2 3" /><circle cx="12" cy="18" r="1" /></Icon></SideButton>
  </SideRail>
);

const ChartArea = () => (
  <ChartCard>
    <Chart />
    <Legend>
      <LegendRow>
        <svg width="17" height="17" viewBox="0 0 17 17" aria-hidden="true">
          <circle cx="11.500" cy="5.500" r="5" fill="#f3d9de" /><path d="M7 3.500h9.500M7.500 6h9M8 8.500h8" stroke="#e2445c" strokeWidth="1.300" /><path d="M6.500 5.500a5 5 0 0 1 5-5v5Z" fill="#3c78c8" />
          <circle cx="6.500" cy="10.500" r="6" fill="#2565b8" stroke="#fff" strokeWidth=".6" /><circle cx="6.500" cy="10.500" r="3" fill="none" stroke="#d8d27a" strokeDasharray="1 1" />
        </svg>
        <SymbolTitle>Euro / U.S. Dollar · 15 · OANDA</SymbolTitle>
        <StatusPill>
          <StatusHalf $tone="#d8f1e8"><svg width="8" height="8" viewBox="0 0 8 8" aria-hidden="true"><circle cx="4" cy="4" r="4" fill="#1aa576" /></svg></StatusHalf>
          <StatusHalf $tone="#f0a8cd">≈</StatusHalf>
        </StatusPill>
        <Ohlc><span>O1.16364</span><span>H1.16393</span><span>L1.16334</span><span>C1.16334</span><span>−0.00031</span><span>(−0.03%)</span></Ohlc>
      </LegendRow>
      <QuoteRow>
        <Quote $tone="#d2415e">1.1603<Pip>5</Pip><QuoteSide>SELL</QuoteSide></Quote>
        <Spread>1.7</Spread>
        <Quote $tone="#5260d8">1.1605<Pip>2</Pip><QuoteSide>BUY</QuoteSide></Quote>
      </QuoteRow>
      <Collapse><Chevron />3</Collapse>
    </Legend>

    <FloatBar $x={190} $y={19} $w={233}>
      <Slot $w={22} aria-label="Move"><Grip /></Slot>
      <Slot $w={36} aria-label="Rectangle"><Icon size={22}><path d="M3 3h18v18H3Z" /><Ring x={3} y={3} /><Ring x={21} y={3} /><Ring x={3} y={21} /><Ring x={21} y={21} /></Icon></Slot>
      <Slot $w={35} aria-label="Short position"><FibDown /></Slot>
      <Slot $w={35} aria-label="Long position"><FibUp /></Slot>
      <Slot $w={35} aria-label="Horizontal ray"><Trend /></Slot>
      <Slot $w={36} aria-label="Vertical line"><Icon size={22}><path d="M12 2v20" /><Ring x={12} y={12} /></Icon></Slot>
      <Slot $w={34} aria-label="Volume profile"><Icon size={24}><path d="M3 2v16M3 4h5v3h4v3H8v3H3M12 7v3h-9" /><path d="M21 4v17" /><Ring x={3} y={19} /><Ring x={21} y={4} /></Icon></Slot>
    </FloatBar>

    <FloatBar $x={580} $y={9} $w={401}>
      <Slot $w={22} aria-label="Move"><Grip /></Slot>
      <Slot $w={35} aria-label="Templates"><Icon size={18}><rect x="2" y="3" width="7.500" height="7" rx="1.500" /><rect x="14" y="3" width="7.500" height="7" rx="1.500" /><rect x="2" y="14.500" width="7.500" height="7" rx="1.500" /><path d="M18 14v8M14 18h8" /></Icon></Slot>
      <Slot $w={35} aria-label="Line color"><Icon size={24}><g transform="translate(2 -1) scale(.85)"><Pencil /></g><path d="M3.500 21.500h17" stroke="#000" strokeWidth="3" /></Icon></Slot>
      <Slot $w={35} aria-label="Text color"><Icon size={24}><path d="M6 4V2h12v2M12 2v12.500M10 14.500h4" /><path d="M3.500 21.500h17" stroke="#d92650" strokeWidth="3" /></Icon></Slot>
      <Slot $w={62}><Icon size={17}><path d="M1 12h22" /></Icon>1px</Slot>
      <Slot $w={37} aria-label="Line style"><Icon size={20}><path d="M1 12h22" /></Icon></Slot>
      <Slot $w={34} aria-label="Settings"><Hex /></Slot>
      <Slot $w={35} aria-label="Add alert"><AlarmPlus /></Slot>
      <Slot $w={35} aria-label="Lock"><OpenLock size={20} /></Slot>
      <Slot $w={35} aria-label="Remove"><Icon size={22}><path d="M3 5h18M8.500 5l1-3h5l1 3M5 5l1.500 16.500h11L19 5" /></Icon></Slot>
      <Slot $w={36} aria-label="More"><Icon size={20} w={1.3}><circle cx="4" cy="12" r="2.200" /><circle cx="12" cy="12" r="2.200" /><circle cx="20" cy="12" r="2.200" /></Icon></Slot>
    </FloatBar>

    <CurrencyBox>
      <Currency aria-label="Currency" defaultValue="USD"><option>USD</option><option>EUR</option></Currency>
      <Chevron size={9} />
    </CurrencyBox>
  </ChartCard>
);

export default function App() {
  return (
    <Screen>
      <GlobalStyle />
      <BrowserChrome />
      <Toolbar />
      <Workspace>
        <Tools />
        <Center>
          <ChartArea />
          <RangeBar>
            <Slot $w={26}>1D</Slot>
            <Slot $w={26}>5D</Slot>
            <Slot $w={27}>1M</Slot>
            <Slot $w={26}>3M</Slot>
            <Slot $w={27}>6M</Slot>
            <Slot $w={35}>YTD</Slot>
            <Slot $w={26}>1Y</Slot>
            <Slot $w={25}>5Y</Slot>
            <Slot $w={24}>All</Slot>
            <Rule />
            <Slot $w={30} aria-label="Go to date"><Icon size={20}><path d="M3 12V5.500A1.500 1.500 0 0 1 4.500 4h16A1.500 1.500 0 0 1 22 5.500v14a1.500 1.500 0 0 1-1.500 1.500H14M3 9h19M8 1.500V5M17 1.500V5M2 17h8M7 13.500l3.500 3.500L7 20.500" /></Icon></Slot>
            <Clock>06:46:07 UTC</Clock>
          </RangeBar>
          <PanelBar>
            <button>Pine Editor</button>
            <button>Trading Panel</button>
            <PanelTools>
              <Slot $w={33} aria-label="Open panel"><Icon size={18}><path d="m2 16 10-9 10 9" /></Icon></Slot>
              <Slot $w={31} aria-label="Maximize panel"><Icon size={18}><path d="M2.500 8V4.500a2 2 0 0 1 2-2h15a2 2 0 0 1 2 2V8M2.500 16v3.500a2 2 0 0 0 2 2h15a2 2 0 0 0 2-2V16" /></Icon></Slot>
            </PanelTools>
          </PanelBar>
        </Center>
        <SideTools />
      </Workspace>
    </Screen>
  );
}
